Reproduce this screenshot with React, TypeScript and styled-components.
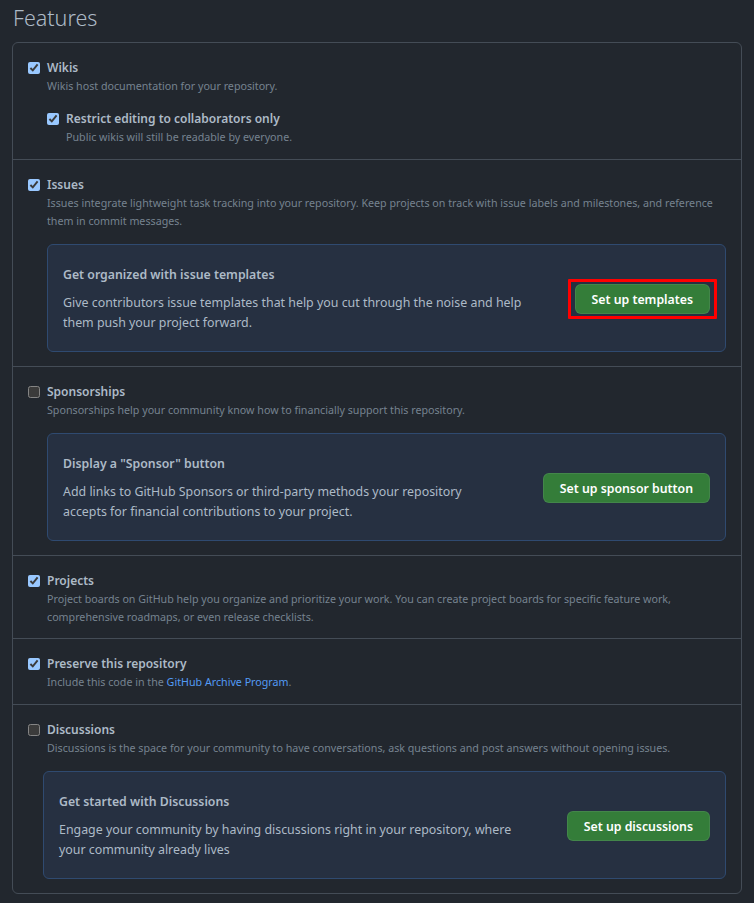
import React from "react";
import styled, { createGlobalStyle } from "styled-components";

const GlobalStyle = createGlobalStyle`
  html, body {
    margin: 0;
    padding: 0;
    background: #22272e;
    color-scheme: dark;
  }
  body {
    font-family: "Noto Sans", "Open Sans", sans-serif;
    color: #adbac7;
  }
`;

const Page = styled.div`
  padding: 4px 12px 8px 12px;
`;

const Title = styled.h2`
  margin: 0 0 10px 1px;
  font-size: 21.5px;
  font-weight: 300;
  line-height: 28px;
  color: #adbac7;
`;

const Box = styled.div`
  border: 1px solid #444c56;
  border-radius: 6px;
`;

const Section = styled.div`
  padding: 16px 15px 12.5px 15px;
  & + & {
    border-top: 1px solid #444c56;
  }
`;

const Row = styled.div<{ nested?: boolean }>`
  display: flex;
  align-items: flex-start;
  gap: 7px;
  margin-top: ${p => (p.nested ? "15px" : "0")};
`;

const Check = styled.input.attrs({ type: "checkbox" })`
  width: 12px;
  height: 12px;
  margin: 3px 0 0 0;
  flex: none;
`;

const Body = styled.div`
  flex: 1;
  min-width: 0;
`;

const Label = styled.div`
  font-size: 12px;
  font-weight: 600;
  line-height: 18px;
  color: #adbac7;
`;

const Note = styled.div`
  font-size: 10.7px;
  line-height: 18px;
  color: #768390;
`;

const Link = styled.a`
  color: #539bf5;
  text-decoration: none;
`;

const Card = styled.div<{ shift?: number }>`
  display: flex;
  align-items: center;
  gap: 40px;
  margin: 14px 0 1.5px ${p => (p.shift ? `${-p.shift}px` : "0")};
  padding: 21px 15px 18px 15px;
  background: #263041;
  border: 1px solid #2f4a70;
  border-radius: 6px;
`;

const CardText = styled.div`
  flex: 1;
  min-width: 0;
`;

const CardTitle = styled.div`
  font-size: 12.3px;
  font-weight: 600;
  line-height: 18px;
  margin-bottom: 9px;
  color: #adbac7;
`;

const CardDesc = styled.div`
  font-size: 12.4px;
  line-height: 20px;
  color: #adbac7;
`;

const Button = styled.button<{ highlighted?: boolean }>`
  position: relative;
  flex: none;
  height: 30px;
  padding: 0 16px;
  border: 1px solid rgba(205, 217, 229, 0.1);
  border-radius: 6px;
  background: #347d39;
  color: #ffffff;
  font-family: inherit;
  font-size: 12.3px;
  font-weight: 600;
  cursor: pointer;

  &::after {
    content: "";
    display: ${p => (p.highlighted ? "block" : "none")};
    position: absolute;
    inset: -6px -8px -6px -8px;
    border: 3px solid #ff0000;
    border-radius: 1px;
    pointer-events: none;
  }
`;

type PromoProps = {
  title: string;
  text: string;
  action: string;
  highlighted?: boolean;
  shift?: number;
};

const Promo = ({ title, text, action, highlighted, shift }: PromoProps) => (
  <Card shift={shift}>
    <CardText>
      <CardTitle>{title}</CardTitle>
      <CardDesc>{text}</CardDesc>
    </CardText>
    <Button highlighted={highlighted}>{action}</Button>
  </Card>
);

const App = () => {
  return (
    <Page>
      <GlobalStyle />
      <Title>Features</Title>
      <Box>
        <Section>
          <Row>
            <Check defaultChecked />
            <Body>
              <Label>Wikis</Label>
              <Note>Wikis host documentation for your repository.</Note>
              <Row nested>
                <Check defaultChecked />
                <Body>
                  <Label>Restrict editing to collaborators only</Label>
                  <Note>Public wikis will still be readable by everyone.</Note>
                </Body>
              </Row>
            </Body>
          </Row>
        </Section>

        <Section>
          <Row>
            <Check defaultChecked />
            <Body>
              <Label>Issues</Label>
              <Note>
                Issues integrate lightweight task tracking into your repository. Keep projects on track
                with issue labels and milestones, and reference them in commit messages.
              </Note>
              <Promo
                title="Get organized with issue templates"
                text="Give contributors issue templates that help you cut through the noise and help them push your project forward."
                action="Set up templates"
                highlighted
              />
            </Body>
          </Row>
        </Section>

        <Section>
          <Row>
            <Check />
            <Body>
              <Label>Sponsorships</Label>
              <Note>Sponsorships help your community know how to financially support this repository.</Note>
              <Promo
                title={'Display a "Sponsor" button'}
                text="Add links to GitHub Sponsors or third-party methods your repository accepts for financial contributions to your project."
                action="Set up sponsor button"
              />
            </Body>
          </Row>
        </Section>

        <Section>
          <Row>
            <Check defaultChecked />
            <Body>
              <Label>Projects</Label>
              <Note>
                Project boards on GitHub help you organize and prioritize your work. You can create project
                boards for specific feature work, comprehensive roadmaps, or even release checklists.
              </Note>
            </Body>
          </Row>
        </Section>

        <Section>
          <Row>
            <Check defaultChecked />
            <Body>
              <Label>Preserve this repository</Label>
              <Note>
                Include this code in the <Link href="#">GitHub Archive Program</Link>.
              </Note>
            </Body>
          </Row>
        </Section>

        <Section>
          <Row>
            <Check />
            <Body>
              <Label>Discussions</Label>
              <Note>
                Discussions is the space for your community to have conversations, ask questions and post
                answers without opening issues.
              </Note>
              <Promo
                title="Get started with Discussions"
                text="Engage your community by having discussions right in your repository, where your community already lives"
                action="Set up discussions"
                shift={4}
              />
            </Body>
          </Row>
        </Section>
      </Box>
    </Page>
  );
};

export default App;
